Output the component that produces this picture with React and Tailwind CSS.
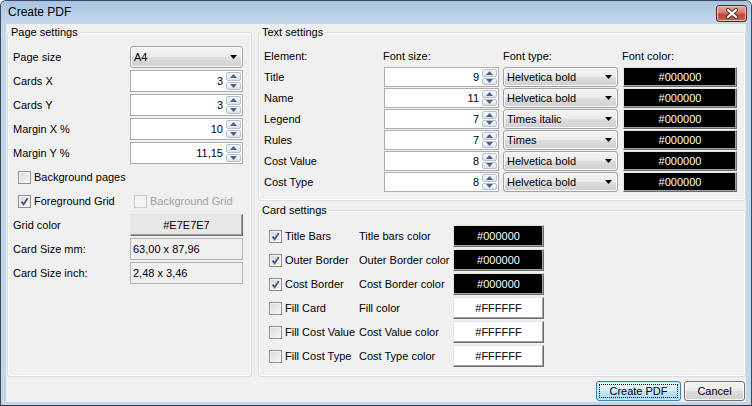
import React from "react";

// Windows 7 style "Create PDF" dialog

const btnGrad =
  "bg-[linear-gradient(to_bottom,#f3f3f3_0%,#ebebeb_50%,#dddddd_50%,#d0d0d0_100%)]";

const leftRows = [
  ["Cards X", "3"],
  ["Cards Y", "3"],
  ["Margin X %", "10"],
  ["Margin Y %", "11,15"],
];

const fontRows = [
  ["Title", "9", "Helvetica bold"],
  ["Name", "11", "Helvetica bold"],
  ["Legend", "7", "Times italic"],
  ["Rules", "7", "Times"],
  ["Cost Value", "8", "Helvetica bold"],
  ["Cost Type", "8", "Helvetica bold"],
];

const cardRows = [
  ["Title Bars", "Title bars color", true, "#000000"],
  ["Outer Border", "Outer Border color", true, "#000000"],
  ["Cost Border", "Cost Border color", true, "#000000"],
  ["Fill Card", "Fill color", false, "#FFFFFF"],
  ["Fill Cost Value", "Cost Value color", false, "#FFFFFF"],
  ["Fill Cost Type", "Cost Type color", false, "#FFFFFF"],
];

function Group({ title, className, children }) {
  return (
    <div
      className={`relative border border-[#d5dfe5] rounded-[3px] shadow-[inset_0_0_0_1px_#ffffff] ${className}`}
    >
      <span className="absolute left-[2px] -top-[8px] px-[1px] bg-[#f0f0f0] leading-[14px]">
        {title}
      </span>
      {children}
    </div>
  );
}

function Check({ checked, disabled }) {
  return (
    <span
      className={`w-[13px] h-[13px] shrink-0 border flex items-center justify-center ${
        disabled
          ? "border-[#c9c9c9] bg-[#f4f4f4]"
          : "border-[#8f8f8f] bg-[linear-gradient(135deg,#d8d8d8,#f8f8f8)] shadow-[inset_0_0_0_1px_#f4f4f4]"
      }`}
    >
      {checked && (
        <svg width="9" height="9" viewBox="0 0 9 9">
          <path d="M1.5 4.6 L3.6 7.2 L7.6 1.2" fill="none" stroke="#3e5182" strokeWidth="1.7" />
        </svg>
      )}
    </span>
  );
}

function Spin() {
  return (
    <div className="flex flex-col gap-[1px] w-[16px] py-[1px] pr-[1px]">
      {["up", "down"].map((d) => (
        <div
          key={d}
          className="flex-1 flex items-center justify-center border border-[#b7c1cd] rounded-[2px] bg-[linear-gradient(to_bottom,#f8fafc,#dde3ea)]"
        >
          <svg width="7" height="4" viewBox="0 0 7 4">
            <path d={d === "up" ? "M0 4 L3.5 0 L7 4Z" : "M0 0 L7 0 L3.5 4Z"} fill="#4d6185" />
          </svg>
        </div>
      ))}
    </div>
  );
}

function Num({ value, className }) {
  return (
    <div className={`flex border border-[#abadb3] bg-white ${className}`}>
      <span className="flex-1 self-center text-right pr-[3px]">{value}</span>
      <Spin />
    </div>
  );
}

function Arrow() {
  return (
    <svg width="7" height="4" viewBox="0 0 7 4">
      <path d="M0 0 L7 0 L3.5 4Z" fill="#000" />
    </svg>
  );
}

function Combo({ value, className }) {
  return (
    <div
      className={`flex items-center justify-between pl-[3px] pr-[5px] border border-[#a3a3a3] rounded-[3px] ${btnGrad} shadow-[inset_0_0_0_1px_#fafafa] ${className}`}
    >
      <span>{value}</span>
      <Arrow />
    </div>
  );
}

function Swatch({ text, bg, className }) {
  return (
    <div
      className={`flex items-center justify-center border border-t-[#e3e3e3] border-l-[#e3e3e3] border-r-[#6d6d6d] border-b-[#6d6d6d] shadow-[inset_-1px_-1px_0_#a0a0a0] ${bg} ${className}`}
    >
      {text}
    </div>
  );
}

export default function App() {
  return (
    <div className="w-[752px] h-[406px] flex flex-col border border-[#3b4a5c] border-b-[#2b3b4b] rounded-t-[6px] bg-[#c2d6ec] text-[11px] text-black font-['Liberation_Sans',Arial,sans-serif] overflow-hidden">
      {/* title bar */}
      <div className="h-[23px] flex items-start justify-between bg-[linear-gradient(to_bottom,#a7c2e1,#bcd2ea_60%,#c3d7ed)]">
        <span className="pl-[7px] pt-[4px] text-[12px] leading-[15px]">Create PDF</span>
        <div className="mt-[4px] mr-[4px] w-[31px] h-[17px] flex items-center justify-center rounded-[3px] border border-[#5e2620] bg-[linear-gradient(to_bottom,#e6a898,#d47e6b_45%,#c24a38_55%,#c9604a)] shadow-[inset_0_0_0_1px_#eebfb3]">
          <svg width="14" height="11" viewBox="0 0 14 11">
            <path d="M3 2 L11 9 M11 2 L3 9" stroke="#4a3030" strokeWidth="4" strokeLinecap="round" />
            <path d="M3 2 L11 9 M11 2 L3 9" stroke="#ffffff" strokeWidth="2.2" strokeLinecap="round" />
          </svg>
        </div>
      </div>

      {/* client area */}
      <div className="flex-1 mx-[5px] mb-[3px] bg-[#f0f0f0] flex flex-col pt-[8px]">
        <div className="h-[345px] flex gap-[6px] pl-[1px]">
          {/* page settings */}
          <Group title="Page settings" className="w-[245px] pt-[13px] pl-[5px]">
            <div className="flex flex-col gap-[2px]">
              <div className="grid grid-cols-[117px_113px] items-center h-[22px]">
                <span>Page size</span>
                <Combo value="A4" className="h-[22px]" />
              </div>
              {leftRows.map(([label, value]) => (
                <div key={label} className="grid grid-cols-[117px_113px] items-center h-[22px]">
                  <span>{label}</span>
                  <Num value={value} className="h-[22px]" />
                </div>
              ))}
              <div className="h-[22px] flex items-center gap-[3px] pl-[5px]">
                <Check />
                <span>Background pages</span>
              </div>
              <div className="grid grid-cols-[117px_113px] items-center h-[22px]">
                <div className="flex items-center gap-[3px] pl-[5px]">
                  <Check checked />
                  <span>Foreground Grid</span>
                </div>
                <div className="flex items-center gap-[3px] pl-[4px] text-[#a0a0a0]">
                  <Check disabled />
                  <span>Background Grid</span>
                </div>
              </div>
              <div className="grid grid-cols-[117px_113px] items-center h-[22px]">
                <span>Grid color</span>
                <Swatch text="#E7E7E7" bg="bg-[#e7e7e7]" className="h-[22px]" />
              </div>
              <div className="grid grid-cols-[117px_113px] items-center h-[22px]">
                <span>Card Size mm:</span>
                <div className="h-[22px] flex items-center pl-[2px] border border-[#b4b4b4] bg-[#f0f0f0]">
                  63,00 x 87,96
                </div>
              </div>
              <div className="grid grid-cols-[117px_113px] items-center h-[22px]">
                <span>Card Size inch:</span>
                <div className="h-[22px] flex items-center pl-[2px] border border-[#b4b4b4] bg-[#f0f0f0]">
                  2,48 x 3,46
                </div>
              </div>
            </div>
          </Group>

          {/* right column */}
          <div className="flex-1 flex flex-col gap-[9px]">
            <Group title="Text settings" className="h-[169px] pt-[13px] pl-[5px]">
              <div className="grid grid-cols-[116px_115px_115px_115px] gap-x-[4px] gap-y-[1px] auto-rows-[20px] items-center">
                <span>Element:</span>
                <span className="-ml-[1px]">Font size:</span>
                <span>Font type:</span>
                <span>Font color:</span>
                {fontRows.map(([label, size, font]) => (
                  <React.Fragment key={label}>
                    <span>{label}</span>
                    <Num value={size} className="h-[20px]" />
                    <Combo value={font} className="h-[20px]" />
                    <Swatch text="#000000" bg="bg-black text-white" className="h-[20px] ml-[1px]" />
                  </React.Fragment>
                ))}
              </div>
            </Group>

            <Group title="Card settings" className="flex-1 pt-[14px] pl-[10px]">
              <div className="flex flex-col gap-[2px]">
                {cardRows.map(([label, colorLabel, checked, color]) => (
                  <div key={label} className="h-[22px] grid grid-cols-[90px_94px_91px] items-center">
                    <div className="flex items-center gap-[3px]">
                      <Check checked={checked} />
                      <span className="whitespace-nowrap">{label}</span>
                    </div>
                    <span className="whitespace-nowrap">{colorLabel}</span>
                    <Swatch
                      text={color}
                      bg={color === "#000000" ? "bg-black text-white" : "bg-white"}
                      className="h-[22px]"
                    />
                  </div>
                ))}
              </div>
            </Group>
          </div>
        </div>

        {/* buttons */}
        <div className="mt-[4px] flex justify-end gap-[3px] pr-[1px]">
          <div className="w-[85px] h-[20px] p-[2px] border border-[#3c7fb1] rounded-[3px] bg-[linear-gradient(to_bottom,#eaf6fd_0%,#d9f0fc_50%,#bee6fd_50%,#a7d9f5_100%)] shadow-[inset_0_0_0_1px_#c6ecfc]">
            <div className="h-full flex items-center justify-center border border-dotted border-black">
              Create PDF
            </div>
          </div>
          <div
            className={`w-[61px] h-[20px] flex items-center justify-center border border-[#707070] rounded-[3px] ${btnGrad} shadow-[inset_0_0_0_1px_#fafafa]`}
          >
            Cancel
          </div>
        </div>
      </div>
    </div>
  );
}
